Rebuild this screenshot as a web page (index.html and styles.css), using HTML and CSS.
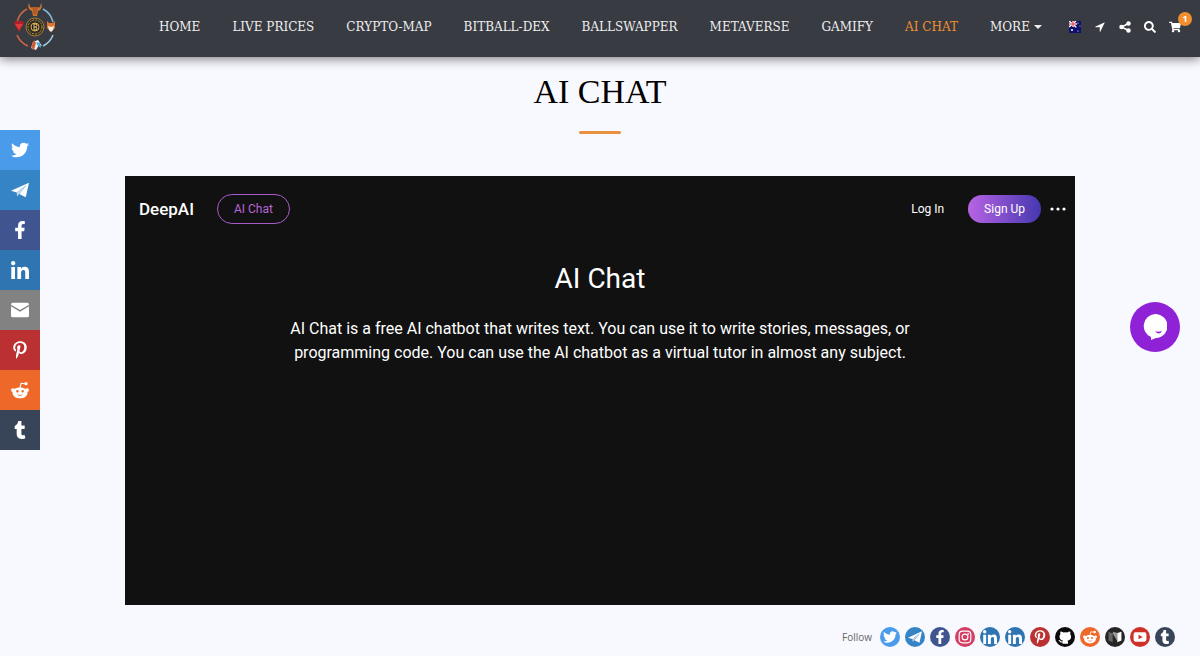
FILE: index.html
```html
<!DOCTYPE html>
<html lang="en">
<head>
    <meta charset="UTF-8">
    <meta name="viewport" content="width=device-width, initial-scale=1.0">
    <title>AI Chat</title>
    <link rel="stylesheet" href="styles.css">
</head>
<body>

    <!-- Icon definitions -->
    <svg class="icon-defs" aria-hidden="true">
        <symbol id="twitter" viewBox="0 0 512 512"><path d="M459.37 151.716c.325 4.548.325 9.097.325 13.645 0 138.72-105.583 298.558-298.558 298.558-59.452 0-114.68-17.219-161.137-47.106 8.447.974 16.568 1.299 25.34 1.299 49.055 0 94.213-16.568 130.274-44.832-46.132-.975-84.792-31.188-98.112-72.772 6.498.974 12.995 1.624 19.818 1.624 9.421 0 18.843-1.3 27.614-3.573-48.081-9.747-84.143-51.98-84.143-102.985v-1.299c13.969 7.797 30.214 12.67 47.431 13.319-28.264-18.843-46.781-51.005-46.781-87.391 0-19.492 5.197-37.36 14.294-52.954 51.655 63.675 129.3 105.258 216.365 109.807-1.624-7.797-2.599-15.918-2.599-24.04 0-57.828 46.782-104.934 104.934-104.934 30.213 0 57.502 12.67 76.67 33.137 23.715-4.548 46.456-13.32 66.599-25.34-7.798 24.366-24.366 44.833-46.132 57.827 21.117-2.273 41.584-8.122 60.426-16.243-14.292 20.791-32.161 39.308-52.628 54.253z"/></symbol>
        <symbol id="telegram" viewBox="1 2 22 20"><path d="M1 13 23 3 19 21 11 17 20 6 8 15z"/><path d="M8 15 20 6 11 16.500 8.500 20z" fill="#c6dcee"/></symbol>
        <symbol id="facebook" viewBox="0 0 320 512"><path d="M279.14 288l14.22-92.66h-88.91v-60.13c0-25.35 12.42-50.06 52.24-50.06h40.42V6.260S260.43 0 225.36 0c-73.22 0-121.08 44.38-121.08 124.72v70.62H22.89V288h81.39v224h100.17V288z"/></symbol>
        <symbol id="linkedin" viewBox="0 0 448 448"><path d="M100.28 448H7.4V148.9h92.88zM53.79 108.1C24.09 108.1 0 83.5 0 53.8a53.79 53.79 0 0 1 107.58 0c0 29.7-24.1 54.3-53.79 54.3zM447.9 448h-92.68V302.4c0-34.7-.7-79.2-48.29-79.2-48.29 0-55.69 37.7-55.69 76.7V448h-92.78V148.9h89.08v40.8h1.3c12.4-23.5 42.69-48.3 87.88-48.3 94 0 111.28 61.9 111.28 142.3V448z"/></symbol>
        <symbol id="mail" viewBox="1 3 22 18"><path d="M3 3h18q2 0 2 2.500L12 12 1 5.500Q1 3 3 3zM1 7.500l11 6.500 11-6.500V19q0 2-2 2H3q-2 0-2-2z"/></symbol>
        <symbol id="pinterest" viewBox="0 0 384 512"><path d="M204 6.5C101.4 6.5 0 74.9 0 185.6 0 256 39.6 296 63.6 296c9.9 0 15.6-27.6 15.6-35.4 0-9.3-23.7-29.1-23.7-67.8 0-80.4 61.2-137.4 140.4-137.4 68.1 0 118.5 38.7 118.5 109.8 0 53.1-21.3 152.7-90.3 152.7-24.9 0-46.2-18-46.2-43.8 0-37.8 26.4-74.4 26.4-113.4 0-66.2-93.9-54.2-93.9 25.8 0 16.8 2.1 35.4 9.6 50.7-13.8 59.4-42 147.9-42 209.1 0 18.9 2.7 37.5 4.5 56.4 3.4 3.8 1.7 3.4 6.9 1.5 50.4-69 48.6-82.5 71.4-172.8 12.3 23.4 44.1 36 69.3 36 106.2 0 153.9-103.5 153.9-196.8C384 71.3 298.2 6.5 204 6.5z"/></symbol>
        <symbol id="reddit" viewBox="0 1 24 22">
            <path fill-rule="evenodd" d="M12 8.500c6 0 10 3 10 7s-4 7.500-10 7.500-10-3.500-10-7.500 4-7 10-7zM8.500 12a1.700 1.700 0 1 0 0 3.400 1.700 1.700 0 0 0 0-3.400zM15.500 12a1.700 1.700 0 1 0 0 3.400 1.700 1.700 0 0 0 0-3.400zM7.500 17.500q4.500 4.500 9 0-4.500 2-9 0z"/>
            <circle cx="2.500" cy="12" r="2.500"/><circle cx="21.500" cy="12" r="2.500"/><circle cx="20" cy="3.500" r="2.200"/>
            <path d="M12 9l1.500-6 5 .8" fill="none" stroke="currentColor" stroke-width="1.400"/>
        </symbol>
        <symbol id="tumblr" viewBox="0 0 320 512"><path d="M309.8 480.3c-13.6 14.5-50 31.7-97.4 31.7-120.8 0-147-88.8-147-140.6v-144H17.9c-5.5 0-10-4.5-10-10v-68c0-7.2 4.5-13.6 11.3-16 62-21.8 81.5-76 84.3-117.1.8-11 6.5-16.3 16.1-16.3h70.9c5.5 0 10 4.5 10 10v115.2h83c5.5 0 10 4.4 10 9.9v81.7c0 5.5-4.5 10-10 10h-83.4V360c0 34.2 23.7 53.6 68 35.8 4.8-1.9 9-3.2 12.7-2.2 3.5.9 5.8 3.4 7.4 7.9l22 64.3c1.8 5 3.3 10.6-.4 14.5z"/></symbol>
        <symbol id="instagram" viewBox="0 0 24 24"><g fill="none" stroke="currentColor" stroke-width="2"><rect x="2" y="2" width="20" height="20" rx="6"/><circle cx="12" cy="12" r="5"/></g><circle cx="17.500" cy="6.500" r="1.500"/></symbol>
        <symbol id="github" viewBox="0 2 23 20"><path d="M4 3q3 0 5 1.700 3-.7 6 0Q17 3 20 3q.8 2.300 0 4.500 2 2 1.500 5Q21 17 15.500 18q1 1 1 3v2h-9v-2q-4 1-5.500-2.500L.8 17q2.200-.7 3.200 1 1.500 2 3.700 1L8.500 18Q3 17 2.500 12.500q-.5-3 1.500-5Q3.200 5.300 4 3z"/></symbol>
        <symbol id="medium" viewBox="0 2 24 20"><path d="M1 3l7 3v15l-7-3z" fill="#666"/><path d="M8 6l8 13V5L9 3z" fill="#999"/><path d="M16 5l7-2v15l-7 3z" fill="#fff"/></symbol>
        <symbol id="youtube" viewBox="0 0 24 24"><path fill-rule="evenodd" d="M4 4q8-.7 16 0 3 0 3 4v8q0 4-3 4-8 .7-16 0-3 0-3-4V8q0-4 3-4zM9.500 8v8l7-4z"/></symbol>
        <symbol id="location" viewBox="0 0 512 512"><path d="M505 7 7 240l12 28h225v225l28 12z"/></symbol>
        <symbol id="share" viewBox="0 0 24 24"><circle cx="19" cy="5" r="4.500"/><circle cx="5" cy="12" r="4.500"/><circle cx="19" cy="19" r="4.500"/><path d="M19 5 5 12l14 7" fill="none" stroke="currentColor" stroke-width="3"/></symbol>
        <symbol id="search" viewBox="0 0 512 512"><path d="M505 442.700L405.300 343c-4.500-4.500-10.600-7-17-7H372c27.600-35.300 44-79.700 44-128C416 93.100 322.900 0 208 0S0 93.100 0 208s93.100 208 208 208c48.300 0 92.700-16.400 128-44v16.300c0 6.400 2.500 12.500 7 17l99.700 99.700c9.400 9.400 24.600 9.400 33.900 0l28.300-28.300c9.400-9.400 9.400-24.600.1-34zM208 336c-70.700 0-128-57.200-128-128 0-70.700 57.200-128 128-128 70.700 0 128 57.200 128 128 0 70.700-57.200 128-128 128z"/></symbol>
        <symbol id="cart" viewBox="0 0 576 512"><path d="M528.12 301.319l47.273-208C578.806 78.301 567.391 64 551.99 64H159.208l-9.166-44.81C147.758 8.021 137.93 0 126.529 0H24C10.745 0 0 10.745 0 24v16c0 13.255 10.745 24 24 24h69.883l70.248 343.435C147.325 417.1 136 435.222 136 456c0 30.928 25.072 56 56 56s56-25.072 56-56c0-15.674-6.447-29.835-16.824-40h209.647C430.447 426.165 424 440.326 424 456c0 30.928 25.072 56 56 56s56-25.072 56-56c0-22.172-12.888-41.332-31.579-50.405l5.517-24.276c3.413-15.018-8.002-29.319-23.403-29.319H218.117l-6.545-32h293.145c11.206 0 20.92-7.754 23.403-18.681z"/></symbol>
    </svg>

    <header class="header">
        <a href="#" class="logo" aria-label="Home page">
            <svg viewBox="0 0 42 50">
                <g fill="none" stroke-width="1.500">
                    <path d="M13 7A20 20 0 0 0 3 20" stroke="#c96a45"/>
                    <path d="M3 33a20 20 0 0 0 11 11" stroke="#dc6840"/>
                    <path d="M29 7a20 20 0 0 1 10 13" stroke="#80b9da"/>
                    <path d="M39 33a20 20 0 0 1-10 11" stroke="#9fcbe2"/>
                </g>
                <circle cx="21" cy="25" r="9" fill="#302c27" stroke="#a98332"/>
                <circle cx="21" cy="25" r="7" fill="none" stroke="#bc943c" stroke-dasharray="2 1"/>
                <circle cx="21" cy="25" r="4" fill="#171a1c" stroke="#dfb54c"/>
                <path d="M20 22v6m0-6h2q2 1 0 3 2 2 0 3h-2m0-3h2" fill="none" stroke="#f2cc62"/>
                <path d="M15 1l1 4 3 1 4 0 3-1 1-4q2 4-1 7l-2 1-1 5h-4l-1-5-2-1q-3-3-1-7z" fill="#d0762f"/>
                <path d="M18 5h6l-1 5-1 3h-2l-1-3z" fill="#b45c24"/>
                <path d="M0 21l2-2h6l2 2-5 9z" fill="#b51e28"/>
                <path d="M1 22h8l-4 6z" fill="#e13739"/>
                <path d="M33 19l2 2h4l2-2v7l-4 4-4-4z" fill="#e0752e"/>
                <path d="M34 24l3 1 3-1-1 4-2 2-2-2z" fill="#f1eee6"/>
                <path d="M17 46l2-6 5-2 4 6-3-1-3 5z" fill="#e9f3f6"/>
                <path d="M17 45l3-7 2 3-2 7z" fill="#d75b32"/>
                <path d="M22 40l4 1 1 5-3-2z" fill="#48a9cf"/>
            </svg>
        </a>

        <nav class="main-nav">
            <a href="#">HOME</a>
            <a href="#">LIVE PRICES</a>
            <a href="#">CRYPTO-MAP</a>
            <a href="#">BITBALL-DEX</a>
            <a href="#">BALLSWAPPER</a>
            <a href="#">METAVERSE</a>
            <a href="#">GAMIFY</a>
            <a href="#" class="active">AI CHAT</a>
            <a href="#" class="more">MORE</a>
        </nav>

        <div class="tools">
            <button aria-label="Language">
                <svg viewBox="0 0 12 12">
                    <path d="M0 0h12v12H0z" fill="#10106e"/>
                    <path d="M0 0l7 6M7 0L0 6" stroke="#fff" stroke-width="1.500"/>
                    <path d="M4 0v6M0 3h8" stroke="#fff" stroke-width="2"/>
                    <path d="M4 0v6M0 3h8" stroke="#d52b41"/>
                    <g fill="#fff"><circle cx="3" cy="9" r="1"/><circle cx="9" cy="2" r=".6"/><circle cx="11" cy="5" r=".5"/><circle cx="7" cy="6" r=".5"/><circle cx="9" cy="10" r=".6"/></g>
                </svg>
            </button>
            <button aria-label="Location"><svg class="small"><use href="#location"/></svg></button>
            <button aria-label="Share"><svg><use href="#share"/></svg></button>
            <button aria-label="Search"><svg><use href="#search"/></svg></button>
            <button class="cart" aria-label="Cart"><svg><use href="#cart"/></svg><span class="badge">1</span></button>
        </div>
    </header>

    <main>
        <h1>AI CHAT</h1>

        <section class="chat">
            <div class="chat-bar">
                <a href="#" class="brand">DeepAI</a>
                <a href="#" class="pill">AI Chat</a>
                <a href="#" class="login">Log In</a>
                <button class="signup">Sign Up</button>
                <button class="dots" aria-label="Menu"><svg viewBox="0 0 16 4"><circle cx="2" cy="2" r="1.600"/><circle cx="8" cy="2" r="1.600"/><circle cx="14" cy="2" r="1.600"/></svg></button>
            </div>
            <h2>AI Chat</h2>
            <p>AI Chat is a free AI chatbot that writes text. You can use it to write stories, messages, or programming code. You can use the AI chatbot as a virtual tutor in almost any subject.</p>
        </section>
    </main>

    <footer class="follow">
        <span>Follow</span>
        <a href="#" class="twitter" aria-label="Twitter"><svg><use href="#twitter"/></svg></a>
        <a href="#" class="telegram" aria-label="Telegram"><svg><use href="#telegram"/></svg></a>
        <a href="#" class="facebook" aria-label="Facebook"><svg><use href="#facebook"/></svg></a>
        <a href="#" class="instagram" aria-label="Instagram"><svg><use href="#instagram"/></svg></a>
        <a href="#" class="linkedin" aria-label="LinkedIn"><svg><use href="#linkedin"/></svg></a>
        <a href="#" class="linkedin" aria-label="LinkedIn company"><svg><use href="#linkedin"/></svg></a>
        <a href="#" class="pinterest" aria-label="Pinterest"><svg><use href="#pinterest"/></svg></a>
        <a href="#" class="github" aria-label="GitHub"><svg><use href="#github"/></svg></a>
        <a href="#" class="reddit" aria-label="Reddit"><svg><use href="#reddit"/></svg></a>
        <a href="#" class="medium" aria-label="Medium"><svg><use href="#medium"/></svg></a>
        <a href="#" class="youtube" aria-label="YouTube"><svg><use href="#youtube"/></svg></a>
        <a href="#" class="tumblr" aria-label="Tumblr"><svg><use href="#tumblr"/></svg></a>
    </footer>

    <!-- Share buttons on the left edge -->
    <div class="share-bar">
        <a href="#" class="twitter" aria-label="Share on Twitter"><svg><use href="#twitter"/></svg></a>
        <a href="#" class="telegram" aria-label="Share on Telegram"><svg><use href="#telegram"/></svg></a>
        <a href="#" class="facebook" aria-label="Share on Facebook"><svg><use href="#facebook"/></svg></a>
        <a href="#" class="linkedin" aria-label="Share on LinkedIn"><svg><use href="#linkedin"/></svg></a>
        <a href="#" class="mail" aria-label="Share by email"><svg><use href="#mail"/></svg></a>
        <a href="#" class="pinterest" aria-label="Share on Pinterest"><svg><use href="#pinterest"/></svg></a>
        <a href="#" class="reddit" aria-label="Share on Reddit"><svg><use href="#reddit"/></svg></a>
        <a href="#" class="tumblr" aria-label="Share on Tumblr"><svg><use href="#tumblr"/></svg></a>
    </div>

    <button class="chat-bubble" aria-label="Open chat">
        <svg viewBox="0 0 24 26"><path d="M12 0a12 12 0 0 1 1 24l-5 2v-3A12 12 0 0 1 12 0z"/><path d="M12 17q3 1.500 7 0-3 5-7 0z" fill="#8f22d6"/></svg>
    </button>

</body>
</html>
```
FILE: styles.css
```css
* {
    box-sizing: border-box;
}

body {
    margin: 0;
    min-height: 100vh;
    display: flex;
    flex-direction: column;
    background: #f8f8ff;
    font-family: "Open Sans", sans-serif;
}

a {
    color: inherit;
    text-decoration: none;
}

button {
    padding: 0;
    border: none;
    background: none;
    color: inherit;
    cursor: pointer;
}

svg {
    display: block;
    fill: currentColor;
}

.icon-defs {
    position: absolute;
    width: 0;
    height: 0;
}

/* Header */
.header {
    height: 57px;
    padding: 0 19px 3px 14px;
    display: flex;
    align-items: center;
    background: #393b43;
    color: #fff;
    box-shadow: 0 2px 10px rgba(0, 0, 0, 0.5);
}

.logo svg {
    width: 42px;
    height: 50px;
}

.main-nav {
    flex: 1;
    display: flex;
    justify-content: space-between;
    margin: 0 26px 0 103px;
    font-family: "DejaVu Serif", serif;
    font-size: 12px;
    white-space: nowrap;
    color: #eee;
}

.main-nav .active {
    color: #f18f2f;
}

.more {
    display: flex;
    align-items: center;
    gap: 4px;
}

.more::after {
    content: "";
    border: 4px solid transparent;
    border-top-color: currentColor;
    border-bottom: 0;
}

.tools {
    display: flex;
    align-items: center;
    gap: 12px;
}

.tools button {
    width: 13px;
    display: flex;
    justify-content: center;
}

.tools svg {
    flex: none;
    width: 12px;
    height: 12px;
}

.tools .small {
    width: 10px;
    height: 10px;
}

.tools .cart {
    position: relative;
}

.badge {
    position: absolute;
    left: 10px;
    bottom: 7px;
    width: 14px;
    height: 14px;
    border-radius: 50%;
    background: #f18f2f;
    font: bold 9px/14px "Open Sans", sans-serif;
    text-align: center;
}

/* Title */
h1 {
    margin: 14px 0 42px;
    font: 34px/42px "Liberation Serif", serif;
    text-align: center;
    color: #000;
}

h1::after {
    content: "";
    display: block;
    width: 42px;
    height: 3px;
    margin: 18px auto 0;
    border-radius: 2px;
    background: #e8923f;
}

/* Chat panel */
.chat {
    max-width: 950px;
    min-height: 429px;
    margin: 0 auto;
    padding: 18px 9px;
    background: #111;
    color: #fff;
    font-family: Roboto, sans-serif;
    text-align: center;
}

.chat-bar {
    display: flex;
    align-items: center;
    padding-left: 5px;
    font-size: 12px;
}

.brand {
    margin-right: 23px;
    font-size: 17px;
    font-weight: 500;
}

.pill {
    padding: 0 16px;
    border: 1px solid #a85bc8;
    border-radius: 15px;
    line-height: 28px;
    color: #b765d6;
}

.login {
    margin-left: auto;
}

.signup {
    margin: 0 9px 0 24px;
    padding: 0 16px;
    border-radius: 14px;
    background: linear-gradient(90deg, #b863e4, #4538b0);
    font: 12px/28px Roboto, sans-serif;
}

.dots svg {
    width: 16px;
    height: 4px;
}

.chat h2 {
    margin: 37px 0 20px;
    font-size: 28px;
    line-height: 36px;
    font-weight: 400;
}

.chat p {
    max-width: 640px;
    margin: 0 auto;
    font-size: 16px;
    line-height: 24px;
}

/* Social links */
.follow {
    display: flex;
    justify-content: flex-end;
    align-items: center;
    gap: 5px;
    padding: 22px 25px 9px;
    font-size: 10px;
    color: #666;
}

.follow span {
    margin-right: 3px;
}

.follow a,
.share-bar a {
    display: flex;
    align-items: center;
    justify-content: center;
    color: #fff;
}

.follow a {
    width: 20px;
    height: 20px;
    border-radius: 50%;
}

.follow a svg {
    width: 14px;
    height: 14px;
}

.share-bar {
    position: fixed;
    top: 130px;
    left: 0;
}

.share-bar a {
    width: 40px;
    height: 40px;
}

.share-bar svg {
    width: 18px;
    height: 18px;
}

.twitter { background: #4a9be9; }
.telegram { background: #3584c5; }
.facebook { background: #40558f; }
.instagram { background: #d33e65; }
.linkedin { background: #2e75b2; }
.mail { background: #828282; }
.pinterest { background: #bb3131; }
.github { background: #0b0b0b; }
.reddit { background: #ee6829; }
.medium { background: #252525; }
.youtube { background: #cf3028; }
.tumblr { background: #384458; }

.chat-bubble {
    position: fixed;
    right: 20px;
    top: 302px;
    width: 50px;
    height: 50px;
    display: flex;
    align-items: center;
    justify-content: center;
    border-radius: 50%;
    background: #8f22d6;
    color: #fff;
}

.chat-bubble svg {
    width: 24px;
    height: 26px;
}
```
